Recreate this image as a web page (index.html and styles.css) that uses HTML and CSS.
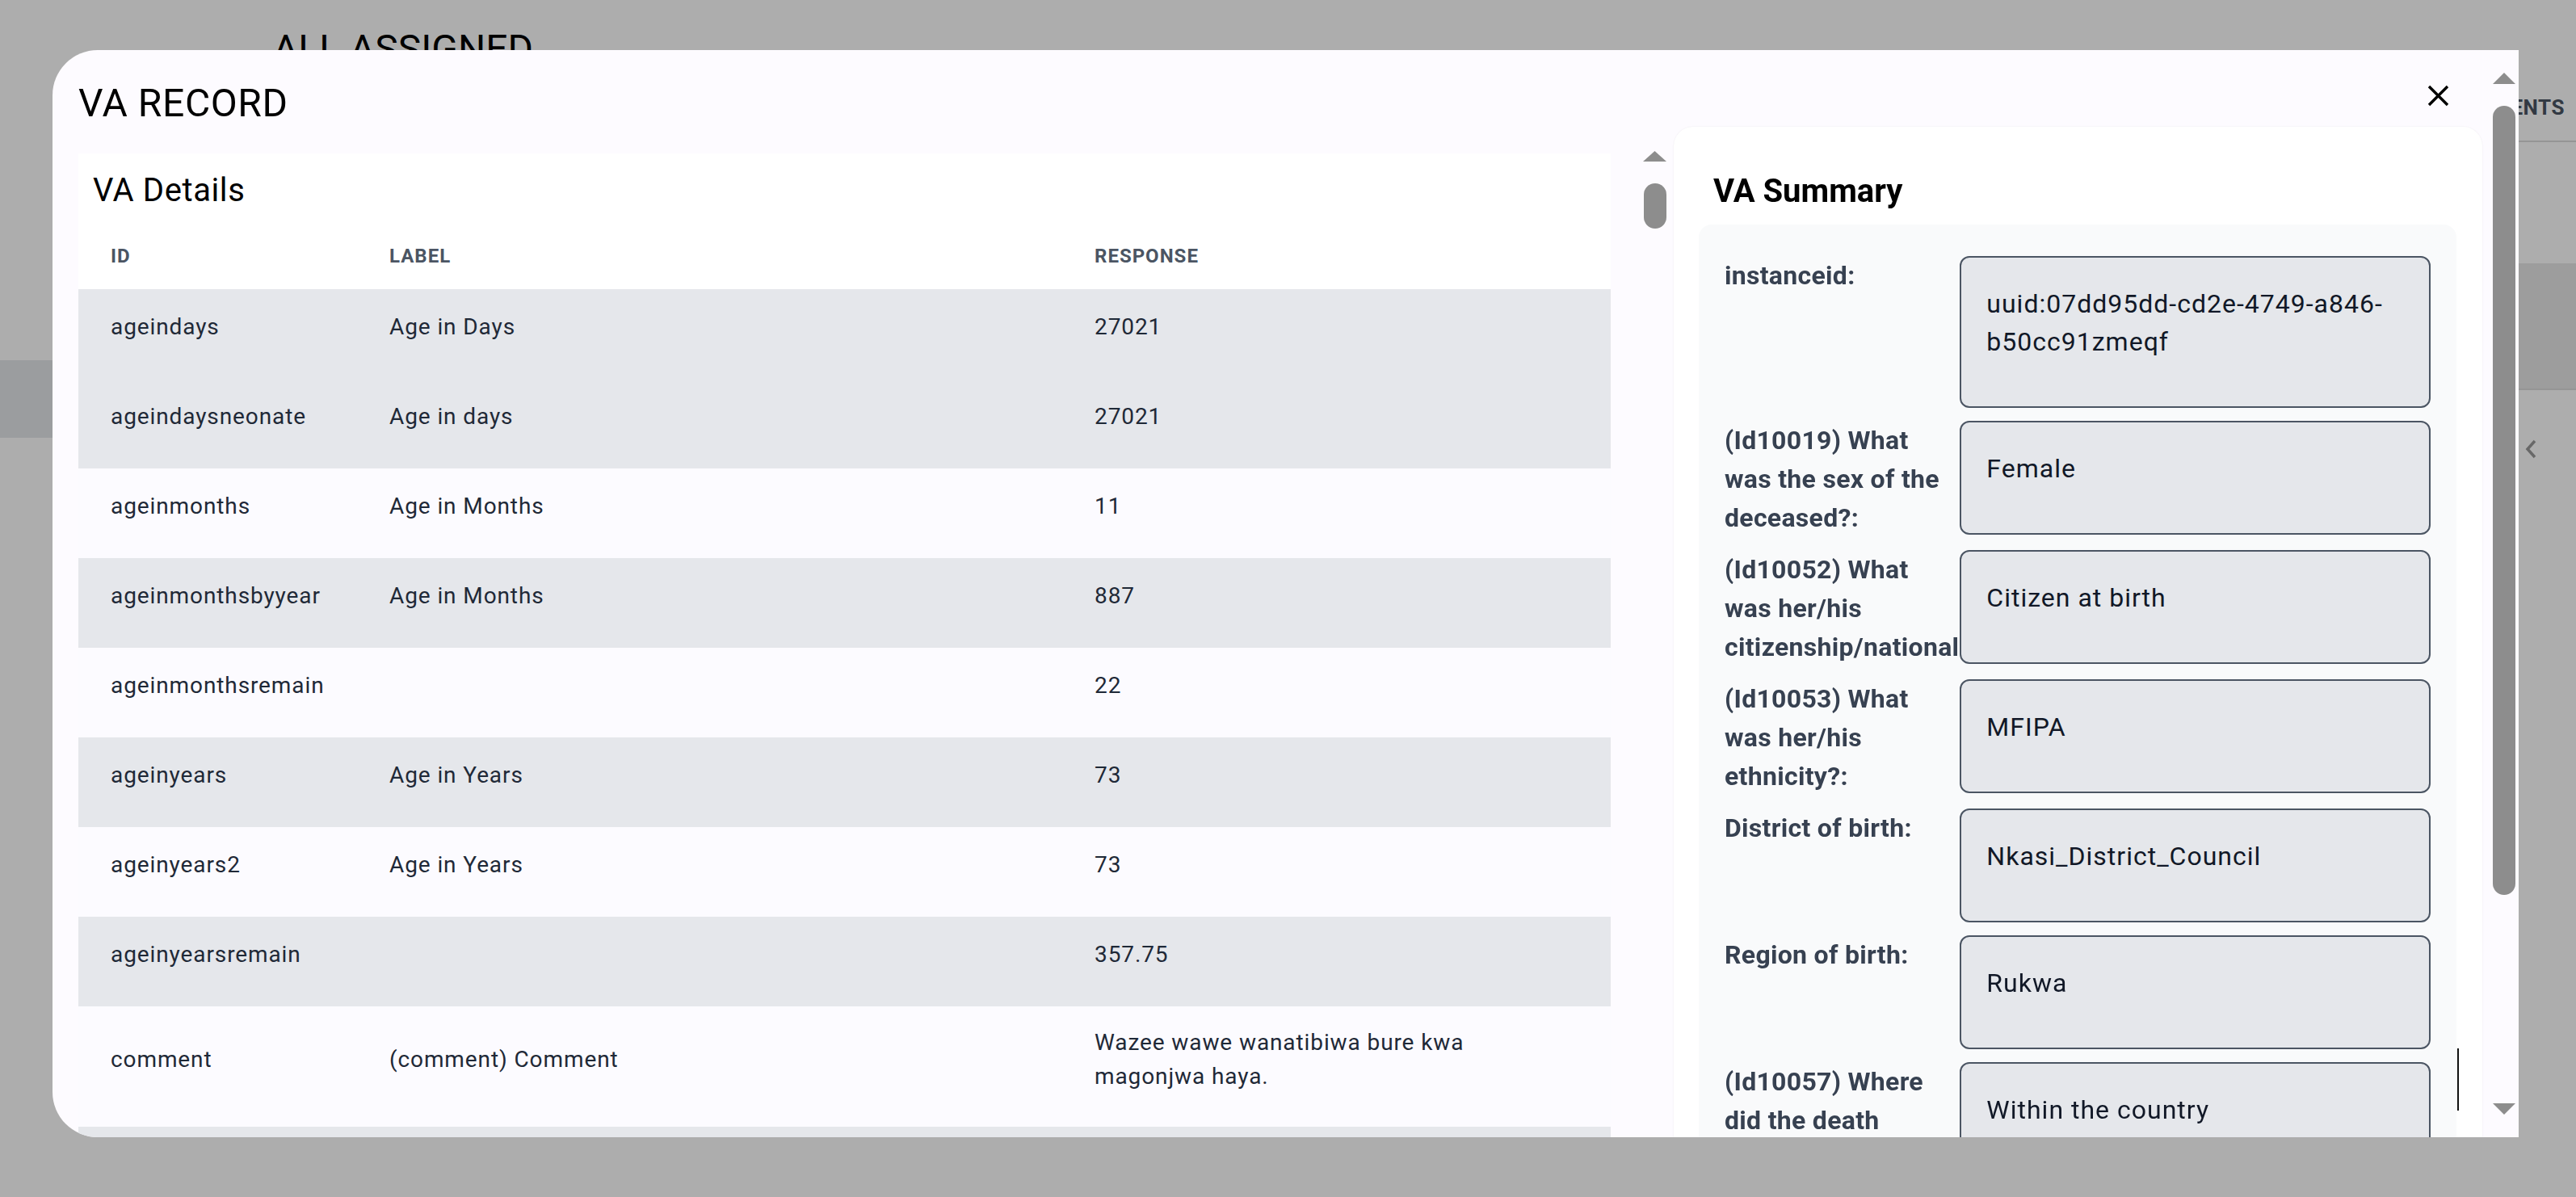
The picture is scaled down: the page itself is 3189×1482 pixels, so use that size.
FILE: index.html
```html
<!DOCTYPE html>
<html lang="en">
<head>
<meta charset="utf-8">
<title>VA Record</title>
<link rel="stylesheet" href="styles.css">
</head>
<body>
<div class="page">
  <main class="page-main">
    <h1 class="page-title">ALL ASSIGNED</h1>
    <div class="page-band"></div>
  </main>
  <aside class="page-side">
    <div class="side-tabs"><span class="side-tab">COMMENTS</span></div>
    <div class="side-gap"></div>
    <div class="side-block"></div>
    <div class="side-chevron">
      <svg width="16" height="26" viewBox="0 0 16 26"><path d="M13 3 L4 13 L13 23" fill="none" stroke="currentColor" stroke-width="3.5"/></svg>
    </div>
  </aside>
</div>

<div class="overlay">
  <div class="modal">
    <div class="modal-main">
      <div class="modal-head">
        <h2 class="modal-title">VA RECORD</h2>
        <button class="close" aria-label="Close">
          <svg width="27" height="27" viewBox="0 0 27 27"><path d="M2 2 L25 25 M25 2 L2 25" stroke="#000" stroke-width="3.4" fill="none"/></svg>
        </button>
      </div>
      <div class="modal-body">
        <div class="details-scroll">
          <section class="details-card">
            <h3 class="details-title">VA Details</h3>
            <table class="details-table">
              <colgroup><col class="c-id"><col class="c-label"><col class="c-resp"></colgroup>
              <thead>
                <tr><th>ID</th><th>Label</th><th>Response</th></tr>
              </thead>
              <tbody>
                <tr class="shade"><td>ageindays</td><td>Age in Days</td><td>27021</td></tr>
                <tr class="shade"><td>ageindaysneonate</td><td>Age in days</td><td>27021</td></tr>
                <tr><td>ageinmonths</td><td>Age in Months</td><td>11</td></tr>
                <tr class="shade"><td>ageinmonthsbyyear</td><td>Age in Months</td><td>887</td></tr>
                <tr><td>ageinmonthsremain</td><td></td><td>22</td></tr>
                <tr class="shade"><td>ageinyears</td><td>Age in Years</td><td>73</td></tr>
                <tr><td>ageinyears2</td><td>Age in Years</td><td>73</td></tr>
                <tr class="shade"><td>ageinyearsremain</td><td></td><td>357.75</td></tr>
                <tr><td>comment</td><td>(comment) Comment</td><td><div class="resp-wrap">Wazee wawe wanatibiwa bure kwa magonjwa haya.</div></td></tr>
                <tr class="shade"><td></td><td></td><td></td></tr>
              </tbody>
            </table>
          </section>
          <div class="vscroll vscroll-inner">
            <svg class="arrow" width="29" height="13" viewBox="0 0 29 13"><path d="M14.5 0 L29 13 L0 13 Z"/></svg>
            <div class="thumb thumb-small"></div>
          </div>
        </div>
        <section class="summary-card">
          <h3 class="summary-title">VA Summary</h3>
          <div class="summary-box">
            <div class="s-row"><div class="s-label">instanceid:</div><div class="s-value">uuid:07dd95dd-cd2e-4749-a846-b50cc91zmeqf</div></div>
            <div class="s-row"><div class="s-label">(Id10019) What was the sex of the deceased?:</div><div class="s-value">Female</div></div>
            <div class="s-row"><div class="s-label">(Id10052) What was her/his citizenship/nationality?:</div><div class="s-value">Citizen at birth</div></div>
            <div class="s-row"><div class="s-label">(Id10053) What was her/his ethnicity?:</div><div class="s-value">MFIPA</div></div>
            <div class="s-row"><div class="s-label">District of birth:</div><div class="s-value">Nkasi_District_Council</div></div>
            <div class="s-row"><div class="s-label">Region of birth:</div><div class="s-value">Rukwa</div></div>
            <div class="s-row"><div class="s-label">(Id10057) Where did the death occur?:</div><div class="s-value">Within the country</div></div>
          </div>
        </section>
      </div>
    </div>
    <div class="vscroll vscroll-modal">
      <svg class="arrow" width="28" height="14" viewBox="0 0 28 14"><path d="M14 0 L28 14 L0 14 Z"/></svg>
      <div class="thumb thumb-big"></div>
      <svg class="arrow arrow-down" width="28" height="14" viewBox="0 0 28 14"><path d="M0 0 L28 0 L14 14 Z"/></svg>
    </div>
    <div class="focus-mark"></div>
  </div>
</div>
</body>
</html>
```

FILE: styles.css
```css
* { box-sizing: border-box; }

html, body {
  margin: 0;
  padding: 0;
  height: 100%;
  overflow: hidden;
}

body {
  font-family: Roboto, "Liberation Sans", Arial, sans-serif;
  background: #ffffff;
  color: #111827;
}

/* ---------- underlying page ---------- */
.page {
  display: grid;
  grid-template-columns: 1fr 300px;
  height: 100vh;
}

.page-main {
  padding: 33px 0 0 0;
}

.page-title {
  margin: 0 0 0 338px;
  font-size: 48px;
  line-height: 56px;
  font-weight: 400;
  color: #000;
}

.page-band {
  margin-top: 357px;
  width: 200px;
  height: 96px;
  background: #e5e7eb;
}

.page-side {
  display: flex;
  flex-direction: column;
}

.side-tabs {
  height: 176px;
  border-bottom: 2px solid #dcdcdc;
  display: flex;
  align-items: flex-end;
  justify-content: flex-end;
  padding: 0 14px 26px 0;
}

.side-tab {
  font-size: 26px;
  line-height: 30px;
  font-weight: 700;
  color: #4b5563;
  letter-spacing: 0.5px;
}

.side-gap { height: 150px; }

.side-block {
  height: 157px;
  background: #e7e7e8;
  border-bottom: 2px solid #dcdcdc;
}

.side-chevron {
  margin: 60px 0 0 236px;
  color: #9a9a9a;
}

/* ---------- overlay / modal ---------- */
.overlay {
  position: fixed;
  inset: 0;
  background: rgba(0, 0, 0, 0.32);
}

.modal {
  position: fixed;
  left: 65px;
  top: 62px;
  width: 3053px;
  height: 1346px;
  background: #fdfbff;
  border-radius: 56px 0 0 56px;
  overflow: hidden;
  display: flex;
}

.modal-main {
  flex: 1;
  min-width: 0;
  padding: 0 9px 0 32px;
}

.modal-head {
  height: 95px;
  display: flex;
  align-items: flex-start;
}

.modal-title {
  margin: 38px 0 0 0;
  font-size: 48px;
  line-height: 56px;
  font-weight: 400;
  letter-spacing: 0.6px;
  color: #000;
}

.close {
  margin: 43px 41px 0 auto;
  padding: 0;
  border: 0;
  background: transparent;
  width: 27px;
  height: 27px;
  display: flex;
}

.modal-body {
  display: flex;
  align-items: flex-start;
  gap: 9px;
}

/* ---------- details (left) ---------- */
.details-scroll {
  width: 1966px;
  flex: none;
  margin-top: 29px;
  display: flex;
  align-items: flex-start;
  gap: 40px;
}

.details-card {
  width: 1897px;
  flex: none;
  margin-top: 4px;
  background: #ffffff;
}

.details-title {
  margin: 0;
  padding: 18px 18px 12px;
  font-size: 40px;
  line-height: 56px;
  font-weight: 400;
  letter-spacing: 0.6px;
  color: #000;
}

.details-table {
  width: 100%;
  border-collapse: collapse;
  table-layout: fixed;
}

.c-id { width: 345px; }
.c-label { width: 873px; }

.details-table th {
  height: 82px;
  padding: 0 40px;
  text-align: left;
  vertical-align: middle;
  font-size: 24px;
  font-weight: 700;
  text-transform: uppercase;
  letter-spacing: 1px;
  color: #4b5563;
  background: #ffffff;
}

.details-table tbody tr {
  height: 111px;
  background: #fcfbff;
}

.details-table tbody tr.shade {
  background: #e5e7eb;
}

.details-table td {
  padding: 24px 40px 41px;
  vertical-align: middle;
  font-size: 28px;
  line-height: 42px;
  letter-spacing: 0.9px;
  color: #1f2937;
}

.resp-wrap { max-width: 520px; }

/* ---------- scrollbars ---------- */
.vscroll {
  display: flex;
  flex-direction: column;
  align-items: center;
  flex: none;
}

.vscroll .arrow { fill: #8d8d8d; display: block; }

.thumb {
  width: 28px;
  background: #8d8d8d;
  border-radius: 14px;
}

.vscroll-inner { width: 29px; padding-top: 1px; }
.thumb-small { height: 56px; margin-top: 27px; }

.vscroll-modal {
  width: 36px;
  height: 100%;
  padding: 28px 0 28px;
}
.thumb-big { height: 977px; margin-top: 27px; }
.arrow-down { margin-top: auto; }

.focus-mark {
  position: absolute;
  left: 2977px;
  top: 1236px;
  width: 2px;
  height: 77px;
  background: #111;
}

/* ---------- summary (right) ---------- */
.summary-card {
  width: 1001px;
  flex: none;
  background: #ffffff;
  border-radius: 24px 24px 0 0;
  box-shadow: 0 0 2px rgba(0, 0, 0, 0.08);
  padding: 52px 32px 40px 31px;
}

.summary-title {
  margin: 0 0 13px 18px;
  font-size: 40px;
  line-height: 56px;
  font-weight: 700;
  color: #000;
}

.summary-box {
  background: #f9fafb;
  border-radius: 16px;
  padding: 39px 32px 40px;
  display: flex;
  flex-direction: column;
  gap: 16px;
}

.s-row {
  display: grid;
  grid-template-columns: minmax(0, 1fr) minmax(0, 2fr);
  align-items: start;
}

.s-label {
  font-size: 32px;
  line-height: 48px;
  font-weight: 700;
  letter-spacing: 0.3px;
  color: #374151;
}

.s-value {
  position: relative;
  background: #e5e7eb;
  border: 2px solid #4b5563;
  border-radius: 12px;
  padding: 34px 31px 56px;
  font-size: 32px;
  line-height: 47px;
  letter-spacing: 1px;
  color: #111827;
}
```
